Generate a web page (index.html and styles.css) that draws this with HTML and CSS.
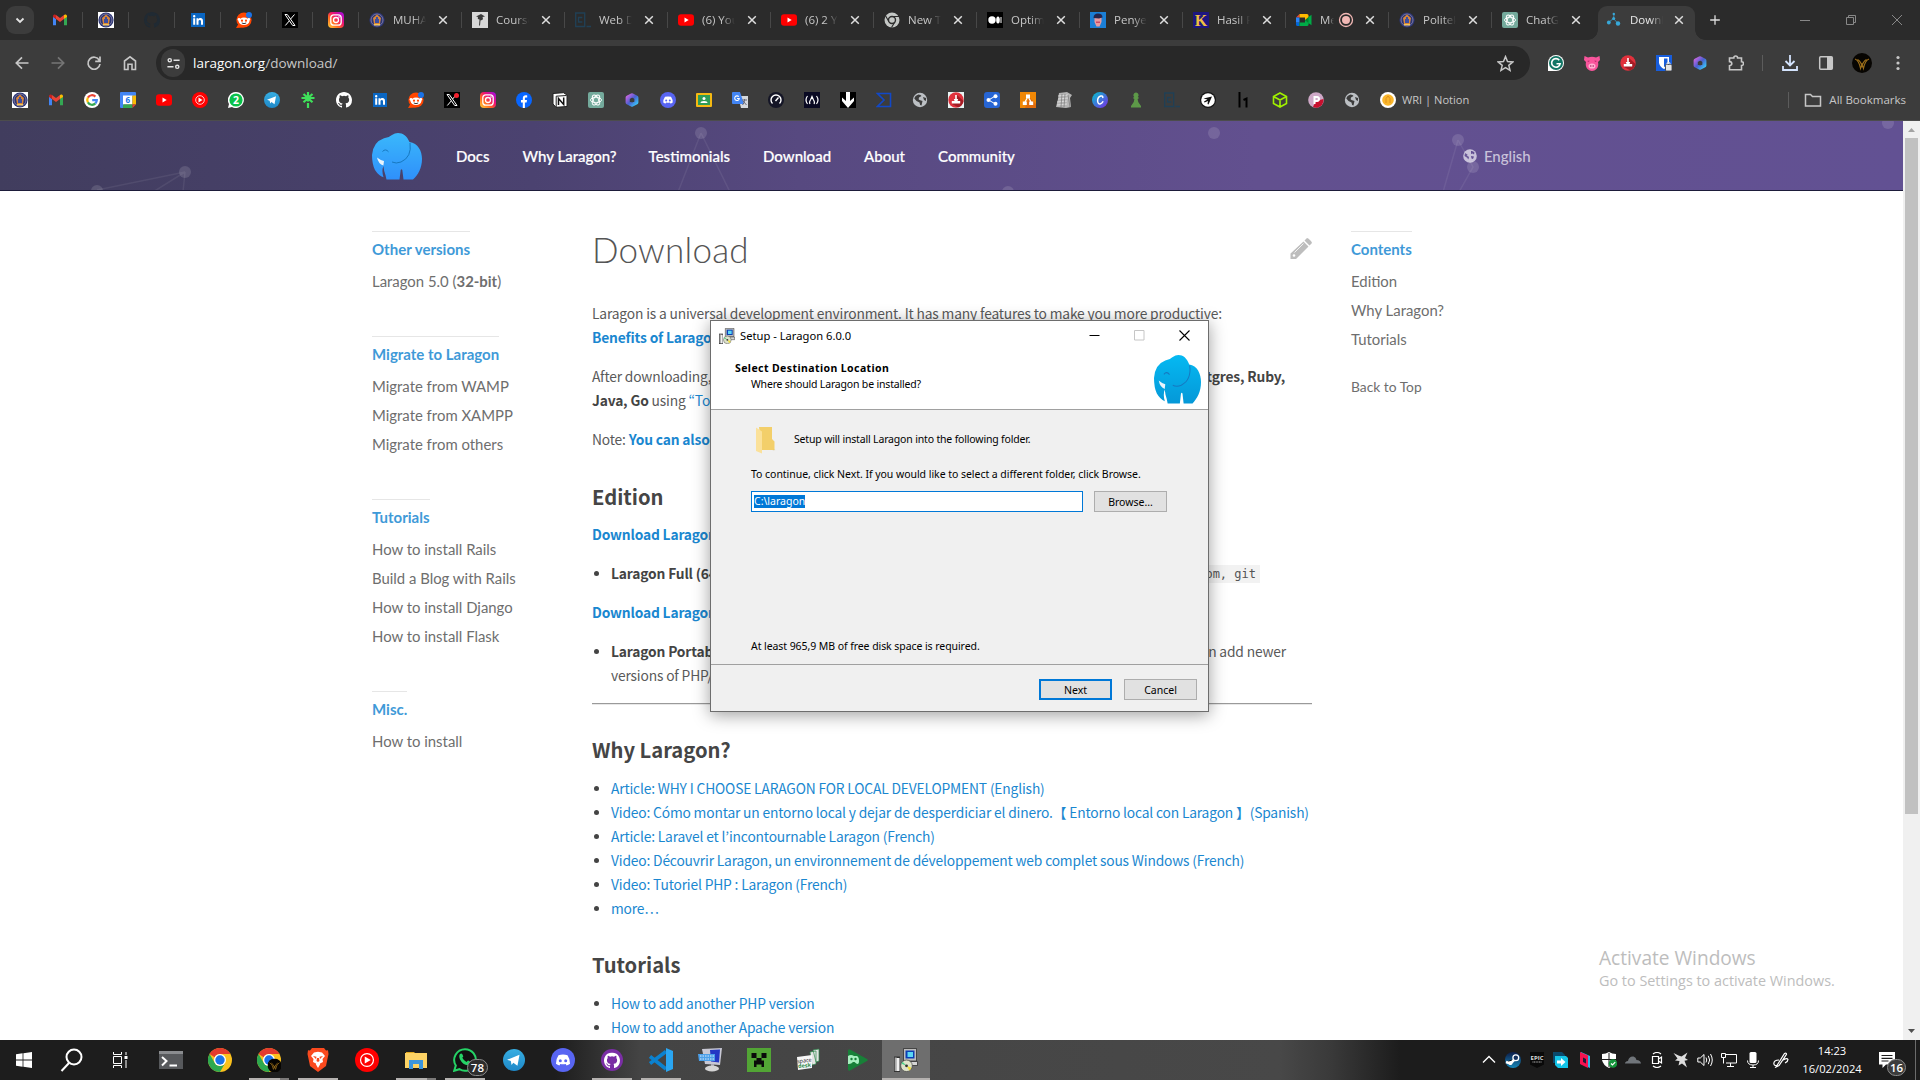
FILE: index.html
```html
<!DOCTYPE html>
<html lang="en">
<head>
<meta charset="utf-8">
<title>Download | Laragon</title>
<link rel="stylesheet" href="styles.css">
</head>
<body>
<svg class="defs" aria-hidden="true">
  <defs>
    <linearGradient id="g-insta" x1="0" y1="1" x2="1" y2="0"><stop offset="0" stop-color="#ffd23b"/><stop offset=".35" stop-color="#ff6a20"/><stop offset=".6" stop-color="#f0146e"/><stop offset="1" stop-color="#9a0af0"/></linearGradient>
    <linearGradient id="g-tele" x1="0" y1="0" x2="0" y2="1"><stop offset="0" stop-color="#37aee2"/><stop offset="1" stop-color="#1e88c8"/></linearGradient>
    <linearGradient id="g-m365" x1="0" y1="0" x2="1" y2="1"><stop offset="0" stop-color="#c065e0"/><stop offset=".5" stop-color="#4a5fd0"/><stop offset="1" stop-color="#3bc0f5"/></linearGradient>
    <linearGradient id="g-canva" x1="0" y1="0" x2="1" y2="1"><stop offset="0" stop-color="#00c4cc"/><stop offset="1" stop-color="#7d2ae8"/></linearGradient>
    <linearGradient id="g-eleph" x1="0" y1="0" x2="0" y2="1"><stop offset="0" stop-color="#3ab8fb"/><stop offset="1" stop-color="#2f90fb"/></linearGradient>
    <linearGradient id="g-eleph2" x1="0" y1="0" x2="0" y2="1"><stop offset="0" stop-color="#05b9f2"/><stop offset="1" stop-color="#0598d8"/></linearGradient>
    <linearGradient id="g-steam" x1="0" y1="0" x2="0" y2="1"><stop offset="0" stop-color="#0d1c48"/><stop offset="1" stop-color="#1787b8"/></linearGradient>
  </defs>
  <symbol id="crest" viewBox="0 0 16 16"><circle cx="8" cy="8" r="7.600" fill="#2b3574"/><circle cx="8" cy="8" r="6" fill="none" stroke="#8e86a8" stroke-width=".8"/><path d="M8 2.500 12 6l-1 6H5L4 6z" fill="#d8863a"/><path d="M7 5h2v2h1v4H6V7h1z" fill="#3d4ea0"/><path d="M5 12h6v1.400H5z" fill="#f3c65a"/></symbol>
  <symbol id="crest-sq" viewBox="0 0 16 16"><path fill="#fff" d="M0 0h16v16H0z"/><use href="#crest"/></symbol>
  <symbol id="gmail" viewBox="0 0 16 16"><path fill="#4285f4" d="M1 4.500v8.800h3V7z"/><path fill="#34a853" d="M12 7v6.300h3V4.500z"/><path fill="#c5221f" d="M1 4.300C1 2.500 3 2 4 3v4L1 5z"/><path fill="#fbbc04" d="M15 4.300C15 2.500 13 2 12 3v4l3-2z"/><path fill="#ea4335" d="M4 3l4 3 4-3v4l-4 3-4-3z"/></symbol>
  <symbol id="github" viewBox="0 0 16 16"><path d="M8 0C3.580 0 0 3.580 0 8c0 3.540 2.290 6.530 5.470 7.590.4.07.55-.17.55-.38v-1.490c-2.010.37-2.530-.49-2.690-.94-.09-.23-.48-.94-.82-1.130-.28-.15-.68-.52-.01-.53.63-.01 1.080.58 1.230.82.72 1.210 1.870.87 2.330.66.07-.52.28-.87.51-1.070-1.780-.2-3.640-.89-3.640-3.950 0-.87.31-1.590.82-2.150-.08-.2-.36-1.020.08-2.120 0 0 .67-.21 2.200.82a7.500 7.500 0 0 1 4 0c1.530-1.040 2.200-.82 2.200-.82.44 1.100.16 1.920.08 2.120.51.56.82 1.270.82 2.150 0 3.070-1.870 3.750-3.650 3.950.29.25.54.73.54 1.480v2.200c0 .21.15.46.55.38A8.010 8.010 0 0 0 16 8c0-4.420-3.580-8-8-8z"/></symbol>
  <symbol id="linkedin" viewBox="0 0 16 16"><path fill="#0a66c2" d="M1 1h14v14H1z"/><path fill="#fff" d="M3.200 6.300h2v6.500h-2zM4.200 3a1.200 1.200 0 1 1 0 2.400 1.200 1.200 0 0 1 0-2.400zM6.500 6.300h1.900v.9c.4-.6 1.100-1.100 2-1.100 2 0 2.600 1.300 2.600 3.100v3.600h-2V9.600c0-.8-.1-1.700-1.200-1.700s-1.300.8-1.300 1.600v3.300h-2z"/></symbol>
  <symbol id="reddit" viewBox="0 0 16 16"><circle cx="8" cy="8" r="7.600" fill="#ff4500"/><path d="M0 16 3 11l5 4.500z" fill="#ff4500"/><ellipse cx="8" cy="9.300" rx="5.300" ry="3.700" fill="#fff"/><circle cx="3" cy="7.500" r="1.400" fill="#fff"/><circle cx="12.800" cy="7.500" r="1.400" fill="#fff"/><circle cx="6" cy="8.700" r="1.100" fill="#ff4500"/><circle cx="10" cy="8.700" r="1.100" fill="#ff4500"/><path d="M5.800 11q2.200 1.300 4.400 0" stroke="#222" fill="none" stroke-width=".9"/><circle cx="13" cy="3" r="3" fill="#1a73e8"/></symbol>
  <symbol id="xcom" viewBox="0 0 16 16"><path d="M0 0h16v16H0z"/><path fill="none" stroke="#fff" d="M3 2.500h2.300l7.700 11h-2.300z"/><path stroke="#fff" d="m12.500 2.500-4 4.600M7.300 8.900l-4 4.600"/></symbol>
  <symbol id="insta" viewBox="0 0 16 16"><rect width="16" height="16" rx="4" fill="url(#g-insta)"/><rect x="2.800" y="2.800" width="10.400" height="10.400" rx="3" fill="none" stroke="#fff" stroke-width="1.300"/><circle cx="8" cy="8" r="2.500" fill="none" stroke="#fff" stroke-width="1.300"/><circle cx="11" cy="5" r=".8" fill="#fff"/></symbol>
  <symbol id="google" viewBox="0 0 16 16"><circle cx="8" cy="8" r="8" fill="#fff"/><g fill="none" stroke-width="2.200"><path stroke="#ea4335" d="M3.900 5.600A4.800 4.800 0 0 1 11.400 4.600"/><path stroke="#fbbc05" d="M3.900 10.400a4.800 4.800 0 0 1 0-4.800"/><path stroke="#34a853" d="M3.900 10.400a4.800 4.800 0 0 0 7.500 1"/><path stroke="#4285f4" d="M11.400 11.400A4.800 4.800 0 0 0 12.800 8.200H8.200"/></g></symbol>
  <symbol id="gcal" viewBox="0 0 16 16"><path fill="#4285f4" d="M1 0h14a1 1 0 0 1 1 1v3H4v12H1a1 1 0 0 1-1-1V1a1 1 0 0 1 1-1z"/><path fill="#fff" d="M3 3.500h9.500v9H3z"/><path fill="#fbbc04" d="M12.500 3.500H16v9h-3.500z"/><path fill="#34a853" d="M3 12.500h9.500V16H3z"/><path fill="#ea4335" d="M12.500 12.500H16L12.500 16z"/><text x="7.700" y="11" font-size="8" font-weight="700" text-anchor="middle" fill="#1a73e8">6</text></symbol>
  <symbol id="youtube" viewBox="0 0 16 16"><rect y="2.300" width="16" height="11.400" rx="3" fill="#f00"/><path fill="#fff" d="m6.500 5.500 4.200 2.500-4.200 2.500z"/></symbol>
  <symbol id="ytmusic" viewBox="0 0 16 16"><circle cx="8" cy="8" r="8" fill="#f00"/><circle cx="8" cy="8" r="4.300" fill="none" stroke="#fff" stroke-width=".8"/><path fill="#fff" d="m6.500 5.600 4 2.400-4 2.400z"/></symbol>
  <symbol id="wa2" viewBox="0 0 16 16"><path fill="#fff" d="M8 0a8 8 0 1 1-4 15L0 16l1-4A8 8 0 0 1 8 0z"/><circle cx="8" cy="8" r="6.600" fill="#0ac14a"/><text x="8" y="11.800" font-size="10.500" font-weight="700" text-anchor="middle" fill="#fff">2</text></symbol>
  <symbol id="telegram" viewBox="0 0 16 16"><circle cx="8" cy="8" r="8" fill="url(#g-tele)"/><path fill="#fff" d="M3 7.800 12 4.200l-1.500 8-3-2.200-1.300 1.600-.5-2.800z"/></symbol>
  <symbol id="linktree" viewBox="0 0 16 16"><path fill="none" stroke="#3fe05a" stroke-width="2.200" d="M8 0v9.500M8 11v5M1.500 6h13M3.500 2 8 6l4.500-4M3.500 10.300 8 6.200l4.500 4.100"/></symbol>
  <symbol id="facebook" viewBox="0 0 16 16"><circle cx="8" cy="8" r="8" fill="#0866ff"/><path fill="#fff" d="M6.800 16v-5.500H5V8h1.800V6.500c0-2.300 1.200-3.200 3-3.200.7 0 1.200.1 1.400.1v2.100H10c-.9 0-1.100.5-1.100 1.200V8H11l-.4 2.500H8.900V16z"/></symbol>
  <symbol id="notion" viewBox="0 0 16 16"><path fill="#fff" stroke="#222" d="M1 1.500 11.500.700 15 3v11.500L4 15.300 1 12z"/><path fill="none" stroke="#222" d="M4.200 4.200 14.500 3.500M4.200 4.200v11"/><path fill="none" stroke="#111" stroke-width="1.500" d="M6.500 13V6.500l5.200 6V5.500"/></symbol>
  <symbol id="chatgpt" viewBox="0 0 16 16"><rect width="16" height="16" rx="2" fill="#74aa9c"/><g fill="none" stroke="#fff" stroke-width=".9"><ellipse cx="8" cy="8" rx="5.500" ry="2.700"/><ellipse cx="8" cy="8" rx="5.500" ry="2.700" transform="rotate(60 8 8)"/><ellipse cx="8" cy="8" rx="5.500" ry="2.700" transform="rotate(120 8 8)"/></g></symbol>
  <symbol id="m365" viewBox="0 0 16 16"><path fill="none" stroke="url(#g-m365)" stroke-width="4.200" stroke-linejoin="round" d="m8 3.300 4.300 2.300v4.800L8 12.700l-4.300-2.300V5.600z"/><path d="M8 5.500 10.200 7v2.500L8 10.500 6 9.500z" fill="#3c3c3c"/></symbol>
  <symbol id="discord" viewBox="0 0 16 16"><circle cx="8" cy="8" r="8" fill="#5865f2"/><path fill="#fff" d="M5 4.800Q8 4 11 4.800q1.900 2.800 1.700 5.700-1.100.9-2.300 1.100l-.6-1q-1.800.5-3.600 0l-.6 1q-1.200-.2-2.300-1.100Q3.100 7.600 5 4.800z"/><circle cx="6.200" cy="8.500" r="1" fill="#5865f2"/><circle cx="9.800" cy="8.500" r="1" fill="#5865f2"/></symbol>
  <symbol id="classroom" viewBox="0 0 16 16"><rect y="1" width="16" height="14" rx="1" fill="#f5b912"/><path fill="#2e9c57" d="M2 3h12v10H2z"/><circle cx="8" cy="6.500" r="1.500" fill="#fff"/><path fill="#fff" d="M4.500 11q0-2 3.500-2t3.500 2z"/></symbol>
  <symbol id="translate" viewBox="0 0 16 16"><path fill="#d5d8dc" d="M6 4h10v12H9z"/><path fill="#4285f4" d="M1 0h7l4 12H1a1 1 0 0 1-1-1V1a1 1 0 0 1 1-1z"/><path fill="none" stroke="#fff" stroke-width="1.100" d="M6.800 4.700A2.300 2.300 0 1 0 7.300 6.500H5"/><path stroke="#667" fill="none" d="M10 8h5M12.500 7v1q0 3-2 5M11 9l3.500 4"/></symbol>
  <symbol id="speed" viewBox="0 0 16 16"><circle cx="8" cy="8" r="8" fill="#141526"/><path fill="none" stroke="#fff" stroke-width="1.400" d="M4.500 11.500a5 5 0 1 1 7 0M7.500 9l3-3.500"/></symbol>
  <symbol id="fcc" viewBox="0 0 16 16"><path fill="#0a0a23" d="M0 0h16v16H0z"/><path fill="none" stroke="#fff" stroke-width="1.200" d="M3.500 4q-3 4 0 8M12.500 4q3 4 0 8M6 12q-1-2 .5-4L8 4.500 9.500 8q1.500 2 .5 4"/></symbol>
  <symbol id="downarrow" viewBox="0 0 16 16"><path d="M0 0h16v16H0z"/><path fill="#fff" d="M6 0h4v9l4-3.500V9l-6 7-6-7V5.500L6 9z"/></symbol>
  <symbol id="sigma" viewBox="0 0 16 16"><path fill="none" stroke="#1148c8" stroke-width="1.600" d="M1.500 1.500h13v13h-13L8 8z"/></symbol>
  <symbol id="globe" viewBox="0 0 16 16"><circle cx="8" cy="8" r="7.200" fill="#bcc0c4"/><path fill="#3c3c3c" d="M6.500 2.500Q9 2.500 9.500 4L7 5.500q-1 2 .5 2.500l3 1-1 4.500q-2-.5-2-3L4.500 9 2.300 6.500Q3 3.500 6.500 2.500zM11 5l3 1v3l-2-1z"/></symbol>
  <symbol id="reddl" viewBox="0 0 16 16"><circle cx="8" cy="8" r="7.700" fill="#e0313c"/><path d="m9 3 6.500 6q-1 5-5.500 6.300L4 12z" fill="#a51c25"/><path fill="#fff" d="M7.200 3h1.600v4h1.400L9.500 9h2.700v2.500H3.800V9h2.700l-.7-2h1.400z"/></symbol>
  <symbol id="reddl-sq" viewBox="0 0 16 16"><path fill="#e8f4f4" d="M0 0h16v16H0z"/><use href="#reddl"/></symbol>
  <symbol id="share" viewBox="0 0 16 16"><rect width="16" height="16" rx="3" fill="#2765d4"/><path stroke="#fff" fill="none" d="M11.500 4 4.500 8l7 4"/><circle cx="4.500" cy="8" r="2" fill="#fff"/><circle cx="11.500" cy="4.200" r="2" fill="#fff"/><circle cx="11.500" cy="11.800" r="2" fill="#fff"/></symbol>
  <symbol id="drawio" viewBox="0 0 16 16"><path fill="#f08705" d="M0 0h16v16H0z"/><path fill="#df6c0c" d="m9 5 7 7v4H5z"/><path stroke="#fff" fill="none" stroke-width="1.300" d="m5 10 3-5.500 3 5.500"/><path fill="#fff" d="M6 2.500h4v3.500H6zM2.800 9.500h4V13h-4zM9.200 9.500h4V13h-4z"/></symbol>
  <symbol id="graypage" viewBox="0 0 16 16"><path fill="#b4b4b4" d="M3 1 11 0l5 3-2 3 1 9-5 1-10-1 2-8z"/><path stroke="#e4e4e4" stroke-width=".8" d="M2 4 12 3M2 7l10-1M1 10l10-1M1 13l10-1"/><path stroke="#777" stroke-width=".7" d="m6 2-1 13M9 2l-1 13M12 3l2 12"/></symbol>
  <symbol id="canva" viewBox="0 0 16 16"><circle cx="8" cy="8" r="8" fill="url(#g-canva)"/><path fill="none" stroke="#fff" stroke-width="1.500" stroke-linecap="round" d="M10.800 5.500q0-2-2-1.500Q5.500 5 5.600 9q.4 3.500 3 2.800 1.500-.4 2.200-2"/></symbol>
  <symbol id="pawn" viewBox="0 0 16 16"><path fill="#5d9948" d="M8 .500a2.600 2.600 0 0 1 1.800 4.500l1.400 1-1.600.9q.2 3 2 5.100l1.400 2v1.500H3V14l1.400-2q1.800-2.100 2-5.100L4.800 6l1.400-1A2.600 2.600 0 0 1 8 .500z"/></symbol>
  <symbol id="codec" viewBox="0 0 16 16"><path fill="none" stroke="#204056" stroke-width="1.300" d="M.7 1h9v13.500h-9zM7.300 5.500H3.500v4.500h3.800M11.500 14.500H16"/></symbol>
  <symbol id="send" viewBox="0 0 16 16"><circle cx="8" cy="8" r="8" fill="#151515"/><circle cx="8" cy="8" r="6.800" fill="#fff"/><path fill="#111" d="M3.500 6.500 12 4.500 8.500 12.500 7.500 12l.5-3-3.500 1.500-.5-1 3.500-2z"/></symbol>
  <symbol id="h1" viewBox="0 0 16 16"><path fill="none" stroke="#000" stroke-width="2" d="M3.500 0v15.500M7.500 8l3-1.500v9"/></symbol>
  <symbol id="cube" viewBox="0 0 16 16"><path fill="none" stroke="#9fef00" stroke-width="1.600" d="m8 1 6.500 3.500v7L8 15l-6.500-3.500v-7zM1.500 4.500 8 8l6.500-3.500M8 8v7"/></symbol>
  <symbol id="pp" viewBox="0 0 16 16"><circle cx="8" cy="8" r="7.800" fill="#cfa9c8"/><path fill="#c8102e" d="m8 9 7.500-2Q16 13 10 15.600q-3 .6-5-.8z"/><path fill="none" stroke="#fff" stroke-width="2" d="M6.500 12V5H9q2 .3 2 2t-2 2H6.500"/></symbol>
  <symbol id="wri" viewBox="0 0 16 16"><circle cx="8" cy="8" r="8" fill="#fff"/><circle cx="8" cy="8" r="5.800" fill="#f9b62c"/><path fill="none" stroke="#e0901c" d="M6 11V6.500L8 4l2 2.500V11"/></symbol>
  <symbol id="chromegray" viewBox="0 0 16 16"><circle cx="8" cy="8" r="7.500" fill="#c4c7c5"/><path stroke="#2b2b2b" fill="none" stroke-width="1.100" d="M8 4.500h7M5 9.800 1.500 3.700M11 9.800 7.500 15.500"/><circle cx="8" cy="8" r="3.500" fill="#c4c7c5" stroke="#2b2b2b" stroke-width="1.400"/></symbol>
  <symbol id="medium" viewBox="0 0 16 16"><path d="M0 0h16v16H0z"/><circle cx="5" cy="8" r="3.700" fill="#fff"/><ellipse cx="11" cy="8" rx="1.800" ry="3.500" fill="#fff"/><path fill="#fff" d="M13.500 5h1v6h-1z"/></symbol>
  <symbol id="penye" viewBox="0 0 16 16"><path fill="#1b7fd6" d="M0 0h16v16H0z"/><path fill="#e89ba0" d="M4.500 5h7v5l-2 4.500h-3l-2-4.500z"/><path fill="#26264d" d="M3.500 6q0-4.500 4.500-4.500t4.500 4L9 6.500z"/><path fill="#c94a66" d="M6 9.500h4v1.500H6z"/></symbol>
  <symbol id="kk" viewBox="0 0 16 16"><path fill="#1d1680" d="M0 0h16v16H0z"/><text x="8" y="13.500" font-family="Liberation Serif, serif" font-size="16" font-weight="700" text-anchor="middle" fill="#f0c040">K</text></symbol>
  <symbol id="meet" viewBox="0 0 16 16"><path fill="#00832d" d="M9 8l4-4v8z"/><path fill="#0066da" d="M0 10.500h3.500V14H1.500A1.500 1.500 0 0 1 0 12.500z"/><path fill="#e94235" d="M3.500 2v3.500H0z"/><path fill="#2684fc" d="M0 5.500h3.500v5H0z"/><path fill="#ffba00" d="M3.500 2H11a1.500 1.500 0 0 1 1.500 1.500V5L9 8V5.500H3.500z"/><path fill="#00ac47" d="M3.500 14H11a1.500 1.500 0 0 0 1.500-1.500V11L9 8v2.500H3.500zM12.500 5 15.500 2.800v10.400L12.500 11z"/></symbol>
  <symbol id="molecule" viewBox="0 0 16 16"><path stroke="#37a8d8" stroke-width=".7" fill="none" d="M3 10 7.500 6.500 8 3M7.500 6.500 11.500 11"/><circle cx="2.800" cy="10.500" r="1.900" fill="#37a8d8"/><circle cx="7.700" cy="6.500" r="1.500" fill="#37a8d8"/><circle cx="7.800" cy="2" r="1.200" fill="#37a8d8"/><circle cx="12" cy="11.500" r="2.200" fill="#37a8d8"/></symbol>
  <symbol id="course" viewBox="0 0 16 16"><path fill="#d8d8d8" d="M0 0h16v16H0z"/><path fill="#3a3a3a" d="M4 4.500 9 2l4 2.500-2.500.5q1.500 3-2 3.500l-.5 5H7l.5-6Q5 7 6 5z"/></symbol>
  <symbol id="cross" viewBox="0 0 16 16"><path stroke="#dedede" stroke-width="1.500" d="m4.200 4.200 7.600 7.600M11.800 4.200l-7.600 7.600"/></symbol>
  <symbol id="grammarly" viewBox="0 0 16 16"><path fill="#fff" d="M8 0a8 8 0 1 1 0 16H0V8a8 8 0 0 1 8-8z"/><circle cx="8" cy="8" r="7" fill="#127565"/><path fill="none" stroke="#fff" stroke-width="1.600" d="M11.300 5.200A4.300 4.300 0 1 0 12.200 8.700H8.500"/></symbol>
  <symbol id="pig" viewBox="0 0 16 16"><path fill="#f9559c" d="M.5 1 4 2.500Q8 1 12 2.500L15.500 1l.5 4-2 2q1 4-1.500 7-2 2-4.500 2t-4.500-2Q1 11 2 7L0 5z"/><path fill="#b32766" d="M3 6 5.500 5.500 5 7zM13 6l-2.500-.5L11 7z"/><ellipse cx="8" cy="11" rx="3.500" ry="2.600" fill="#ffb1d2"/><circle cx="6.800" cy="11" r=".8" fill="#a82060"/><circle cx="9.200" cy="11" r=".8" fill="#a82060"/></symbol>
  <symbol id="bitwarden" viewBox="0 0 16 16"><path fill="#175ddc" d="M0 0h16v16H0z"/><path fill="#fff" d="M3 2h10v6q-1 4-5 6-4-2-5-6z"/><path fill="#175ddc" d="M8 3.500h3.500V8Q11 10.500 8 12.200z"/><rect x="9.500" y="9.500" width="6.500" height="6.500" rx="1" fill="#e4e4e4" stroke="#333" stroke-width=".8"/><path fill="none" stroke="#ddd" d="M11 9.500V7.800h3v1.700"/></symbol>
  <symbol id="elephant" viewBox="0 0 50 47" preserveAspectRatio="none"><path d="M26 0c5 0 9 3 11.500 9C46 10 50 18 50 26c0 9-4 16-9 20.500H31.500L30.300 37q-.8-1.500-1.600 0L27.500 46.500H14.500q-1-5-2.300-8.500l-.8-5q-2 5 .100 11.300-5-1.800-8.500-7.300Q0 31 0 22 1 9 12 5.200q5-.5 7.500-3Q23 0 26 0z"/><path d="M5 24.500q3 2.500 7 3.500l-.6 4.500q-5-1.500-6.400-8z" fill="#eaf4fc"/><path d="M10.500 18.500q3-3.300 6 .300M38 10q2 14-9 19-5 2-9 0" fill="none" stroke="#1778c0" stroke-width="1"/></symbol>
  <symbol id="chrome" viewBox="0 0 24 24"><circle cx="12" cy="12" r="12" fill="#fbc11d"/><path fill="#e33b2e" d="M1.600 6A12 12 0 0 1 22.400 6H12a6 6 0 0 0-5.300 3.200z"/><path fill="#2da94f" d="M1.600 6A12 12 0 0 0 12 24l5.200-9a6 6 0 0 1-10.400 0z"/><circle cx="12" cy="12" r="6" fill="#fff"/><circle cx="12" cy="12" r="4.700" fill="#1a73e8"/></symbol>
  <symbol id="avatar" viewBox="0 0 20 20"><circle cx="10" cy="10" r="10" fill="#070502"/><path fill="none" stroke="#9a6d1a" stroke-width="1.100" d="M3 6q4 1.500 5.500 9.500L10 11l1.500 4.500Q13 7.500 17 6M5.500 6.500Q8.500 8 10 13q1.500-5 4.500-6.500"/></symbol>
  <symbol id="setup" viewBox="0 0 24 24"><path fill="#333" d="M0 8.500h6V24H0z"/><path fill="#a9a9a9" d="M.7 9.500h2V23h-2z"/><path fill="#f0f0f0" d="M2.500 10h3v13h-3z"/><path fill="#bdbdbd" stroke="#222" stroke-width=".7" d="M9.500.500h13V13h-13z"/><path fill="#0b3fb5" d="M11.500 2.500h9v8h-9z"/><path fill="#5ad7f5" d="M13.500 4H19v5h-5.500z"/><path fill="#d5d5d5" stroke="#222" stroke-width=".7" d="M10 13.500h13.500v4H10z"/><circle cx="12.500" cy="17.800" r="5.800" fill="#dfe3c9" stroke="#444" stroke-width=".7"/><path fill="#4ad08a" d="m12.500 17.800-5-2 1-2z"/><path fill="#f2dd3a" d="m12.500 17.800 5 2-2 3z"/><circle cx="12.500" cy="17.800" r="1.400" fill="#333"/></symbol>
</svg>

<div class="screen">
  <div class="tabstrip">
    <div class="tabsearch"><svg viewBox="0 0 28 28"><path d="m10.500 12.500 3.500 3.500 3.500-3.500" fill="none" stroke="#e3e3e3" stroke-width="1.800"/></svg></div>
    <div class="pin"><svg><use href="#gmail"/></svg></div>
    <div class="pin"><svg><use href="#crest-sq"/></svg></div>
    <div class="pin dark"><svg><use href="#github"/></svg></div>
    <div class="pin"><svg><use href="#linkedin"/></svg></div>
    <div class="pin"><svg><use href="#reddit"/></svg></div>
    <div class="pin"><svg><use href="#xcom"/></svg></div>
    <div class="pin"><svg><use href="#insta"/></svg></div>
    <div class="tab"><svg><use href="#crest"/></svg><span>MUHAMMAD</span><svg><use href="#cross"/></svg></div>
    <div class="tab"><svg><use href="#course"/></svg><span>Course</span><svg><use href="#cross"/></svg></div>
    <div class="tab"><svg><use href="#codec"/></svg><span>Web Dev</span><svg><use href="#cross"/></svg></div>
    <div class="tab"><svg><use href="#youtube"/></svg><span>(6) YouT</span><svg><use href="#cross"/></svg></div>
    <div class="tab"><svg><use href="#youtube"/></svg><span>(6) 2 You</span><svg><use href="#cross"/></svg></div>
    <div class="tab"><svg><use href="#chromegray"/></svg><span>New Tab</span><svg><use href="#cross"/></svg></div>
    <div class="tab"><svg><use href="#medium"/></svg><span>Optimi</span><svg><use href="#cross"/></svg></div>
    <div class="tab"><svg><use href="#penye"/></svg><span>Penyeb</span><svg><use href="#cross"/></svg></div>
    <div class="tab"><svg><use href="#kk"/></svg><span>Hasil Pe</span><svg><use href="#cross"/></svg></div>
    <div class="tab rec"><svg><use href="#meet"/></svg><span>Meet</span><svg viewBox="0 0 16 16"><circle cx="8" cy="8" r="6.500" fill="none" stroke="#f2b8b5" stroke-width="1.300"/><circle cx="8" cy="8" r="4" fill="#f2b8b5"/></svg><svg><use href="#cross"/></svg></div>
    <div class="tab"><svg><use href="#crest"/></svg><span>Politekn</span><svg><use href="#cross"/></svg></div>
    <div class="tab last"><svg><use href="#chatgpt"/></svg><span>ChatGP</span><svg><use href="#cross"/></svg></div>
    <div class="tab active"><svg><use href="#molecule"/></svg><span>Downlo</span><svg><use href="#cross"/></svg></div>
    <svg class="newtab" viewBox="0 0 16 16"><path d="M8 2.500v11M2.500 8h11" stroke="#dedede" stroke-width="1.500"/></svg>
    <div class="winbtns">
      <svg viewBox="0 0 12 12"><path d="M1 6.500h10" stroke="#888"/></svg>
      <svg viewBox="0 0 12 12"><path d="M1.500 3.500h7v7h-7zM3.500 3.500v-2h7v7h-2" fill="none" stroke="#888"/></svg>
      <svg viewBox="0 0 12 12"><path d="m1 1 10 10M11 1 1 11" stroke="#888"/></svg>
    </div>
  </div>

  <div class="toolbar">
    <svg class="nav" viewBox="0 0 16 16"><path d="M14.500 8H2.500M8 2.300 2.300 8 8 13.700" fill="none" stroke="#c7c7c7" stroke-width="1.700"/></svg>
    <svg class="nav" viewBox="0 0 16 16"><path d="M1.500 8h12M8 2.300 13.700 8 8 13.700" fill="none" stroke="#757575" stroke-width="1.700"/></svg>
    <svg class="nav" viewBox="0 0 16 16"><path d="M13.300 5.300A6 6 0 1 0 14 9M14 1.500v4.800H9.200" fill="none" stroke="#c7c7c7" stroke-width="1.700"/></svg>
    <svg class="nav" viewBox="0 0 16 16"><path d="M2.500 14.500V6L8 1.800 13.500 6v8.500H10V9.300H6v5.200z" fill="none" stroke="#c7c7c7" stroke-width="1.600"/></svg>
    <div class="omnibox">
      <span class="siteinfo"><svg viewBox="0 0 16 16"><g fill="none" stroke="#e3e3e3" stroke-width="1.500"><circle cx="4" cy="4.500" r="1.700"/><path d="M8 4.500h6.500M1.500 11.500H8"/><circle cx="12" cy="11.500" r="1.700"/></g></svg></span>
      <span class="url"><b>laragon.org</b>/download/</span>
      <svg class="star" viewBox="0 0 16 16"><path d="m8 1.500 1.900 4.600 5 .4-3.800 3.200 1.200 4.800L8 11.900l-4.300 2.600 1.200-4.800L1.100 6.500l5-.4z" fill="none" stroke="#c7c7c7" stroke-width="1.400"/></svg>
    </div>
    <div class="ext">
      <svg><use href="#grammarly"/></svg><svg><use href="#pig"/></svg><svg><use href="#reddl"/></svg><svg><use href="#bitwarden"/></svg><svg><use href="#m365"/></svg>
      <svg viewBox="0 0 16 16"><path d="M1.500 3h4.300q0-2 1.900-2t1.900 2h3.900v3.700q2 0 2 1.900t-2 1.900v4.200h-12v-4q2.300-.2 2.300-2.100t-2.300-2z" fill="none" stroke="#c7c7c7" stroke-width="1.600"/></svg>
    </div>
    <i class="vsep"></i>
    <div class="ext right">
      <svg viewBox="0 0 16 16"><path d="M8 0v10M3.500 6 8 10.500 12.500 6M1 11v4h14v-4" fill="none" stroke="#d3e3fd" stroke-width="1.800"/></svg>
      <svg viewBox="0 0 16 16"><rect x="1.700" y="1.800" width="12.600" height="12.400" rx="1" fill="none" stroke="#c7c7c7" stroke-width="1.500"/><path fill="#c7c7c7" d="M9 2h5v12H9z"/></svg>
      <svg class="big"><use href="#avatar"/></svg>
      <svg viewBox="0 0 16 16"><g fill="#c7c7c7"><circle cx="8" cy="2.500" r="1.600"/><circle cx="8" cy="8" r="1.600"/><circle cx="8" cy="13.500" r="1.600"/></g></svg>
    </div>
  </div>

  <div class="bookmarks">
    <svg><use href="#crest-sq"/></svg><svg><use href="#gmail"/></svg><svg><use href="#google"/></svg><svg><use href="#gcal"/></svg><svg><use href="#youtube"/></svg><svg><use href="#ytmusic"/></svg><svg><use href="#wa2"/></svg><svg><use href="#telegram"/></svg><svg><use href="#linktree"/></svg><svg class="white"><use href="#github"/></svg><svg><use href="#linkedin"/></svg><svg><use href="#reddit"/></svg><svg viewBox="0 0 16 16"><use href="#xcom"/><circle cx="12.500" cy="3.500" r="2.500" fill="#f4212e"/></svg><svg><use href="#insta"/></svg><svg><use href="#facebook"/></svg><svg><use href="#notion"/></svg><svg><use href="#chatgpt"/></svg><svg><use href="#m365"/></svg><svg><use href="#discord"/></svg><svg><use href="#classroom"/></svg><svg><use href="#translate"/></svg><svg><use href="#speed"/></svg><svg><use href="#fcc"/></svg><svg><use href="#downarrow"/></svg><svg><use href="#sigma"/></svg><svg><use href="#globe"/></svg><svg><use href="#reddl-sq"/></svg><svg><use href="#share"/></svg><svg><use href="#drawio"/></svg><svg><use href="#graypage"/></svg><svg><use href="#canva"/></svg><svg><use href="#pawn"/></svg><svg><use href="#codec"/></svg><svg><use href="#send"/></svg><svg><use href="#h1"/></svg><svg><use href="#cube"/></svg><svg><use href="#pp"/></svg><svg><use href="#globe"/></svg><svg><use href="#wri"/></svg>
    <span class="bm-label">WRI | Notion</span>
    <div class="allbm"><i class="vsep"></i><svg viewBox="0 0 18 16"><path d="M1.500 2.500h5l2 2h8v9.500h-15z" fill="none" stroke="#c7c7c7" stroke-width="1.500"/></svg><span>All Bookmarks</span></div>
  </div>

  <div class="viewport">
    <div class="page">
      <header class="site-header">
        <svg class="net" viewBox="0 0 1903 69"><g fill="#fff" fill-opacity=".13"><circle cx="185" cy="51" r="6"/><circle cx="97" cy="70" r="6"/><circle cx="701" cy="12" r="6"/><circle cx="1008" cy="71" r="6"/><circle cx="1214" cy="12" r="6"/><circle cx="1458" cy="19" r="6"/><circle cx="1473" cy="46" r="6"/><circle cx="1888" cy="2" r="6"/></g><path fill="none" stroke="#fff" stroke-opacity=".07" stroke-width="1.500" d="M97 69l88-18-32 20M185 51l-2 20M701 12l-23 59M701 12l29 59M1458 19l15 27-14 25M1458 19l-15 52"/></svg>
        <svg class="logo" fill="url(#g-eleph)"><use href="#elephant"/></svg>
        <nav><a>Docs</a><a>Why Laragon?</a><a class="tight">Testimonials</a><a>Download</a><a>About</a><a>Community</a></nav>
        <div class="lang"><svg viewBox="0 0 14 14"><circle cx="7" cy="7" r="6.800" fill="#c9c2da"/><path fill="#625092" d="M8 2q2-.5 3.500 1.500L11 5.500l-1.500-1L8 5zM2 4l2.500 1.500-.5 1L6 8l-.5 2.500L3.800 8.500 1.500 7zM8 7l3 .5L10 10 8.500 9.500z"/></svg><span>English</span></div>
      </header>
      <div class="content">
        <aside class="side">
          <section><h4>Other versions</h4><a>Laragon 5.0 (<b>32-bit</b>)</a></section>
          <section><h4>Migrate to Laragon</h4><a>Migrate from WAMP</a><a>Migrate from XAMPP</a><a>Migrate from others</a></section>
          <section><h4>Tutorials</h4><a>How to install Rails</a><a>Build a Blog with Rails</a><a>How to install Django</a><a>How to install Flask</a></section>
          <section><h4>Misc.</h4><a>How to install</a></section>
        </aside>
        <main>
          <div class="title"><h1>Download</h1><svg viewBox="0 0 22 22"><path fill="#bdbdbd" d="M14.500 2.500 17 0q1 0 3 2t2 3l-2.500 2.500zM13.500 3.500l5 5L6 21H.5v-5.500z"/><path stroke="#fff" stroke-width=".8" d="m4.500 14.500 9-9"/><circle cx="4" cy="17.500" r="1.300" fill="#fff"/></svg></div>
          <p>Laragon is a universal development environment. It has many features to make you more productive:<br><a><b>Benefits of Laragon</b></a></p>
          <p class="pair"><span>After downloading,</span><b>Postgres, Ruby,</b></p>
          <p class="cont"><b>Java, Go</b> using <a>“Tools”</a></p>
          <p>Note: <a><b>You can also</b></a></p>
          <h2>Edition</h2>
          <p><a><b>Download Laragon</b></a></p>
          <ul><li class="pair"><b>Laragon Full (64-bit)</b><code>om, git</code></li></ul>
          <p><a><b>Download Laragon</b></a></p>
          <ul><li><div class="pair short"><b>Laragon Portable</b><span>can add newer</span></div>versions of PHP/</li></ul>
          <hr>
          <h2>Why Laragon?</h2>
          <ul class="links">
            <li><a>Article: WHY I CHOOSE LARAGON FOR LOCAL DEVELOPMENT (English)</a></li>
            <li><a>Video: Cómo montar un entorno local y dejar de desperdiciar el dinero.【 Entorno local con Laragon 】(Spanish)</a></li>
            <li><a>Article: Laravel et l’incontournable Laragon (French)</a></li>
            <li><a>Video: Découvrir Laragon, un environnement de développement web complet sous Windows (French)</a></li>
            <li><a>Video: Tutoriel PHP : Laragon (French)</a></li>
            <li><a>more…</a></li>
          </ul>
          <h2>Tutorials</h2>
          <ul class="links">
            <li><a>How to add another PHP version</a></li>
            <li><a>How to add another Apache version</a></li>
          </ul>
        </main>
        <aside class="side toc">
          <section><h4>Contents</h4><a>Edition</a><a>Why Laragon?</a><a>Tutorials</a></section>
          <a class="top">Back to Top</a>
        </aside>
      </div>
    </div>
    <div class="scrollbar"><svg viewBox="0 0 17 17"><path d="M5 11h7L8.500 7z" fill="#a3a3a3"/></svg><i></i><svg viewBox="0 0 17 17"><path d="M5 6h7l-3.500 4z" fill="#505050"/></svg></div>
  </div>

  <div class="taskbar">
    <div class="apps">
      <div class="tb"><svg viewBox="0 0 16 16"><path fill="#fff" d="M0 2.300 6.600 1.300v6.300H0zM7.400 1.200 16 0v7.600H7.400zM0 8.400h6.600v6.300L0 13.700zM7.400 8.400H16V16l-8.600-1.200z"/></svg></div>
      <div class="tb s24"><svg viewBox="0 0 24 24"><g fill="none" stroke="#fff" stroke-width="2"><circle cx="14" cy="9" r="7.500"/><path d="m9 15-7.500 8"/></g></svg></div>
      <div class="tb"><svg viewBox="0 0 16 16"><g fill="none" stroke="#fff"><path d="M1.500 4.500h8v7h-8zM1.500 0v2.500h8V0M1.500 16v-2.500h8V16M14 0v3M14 8v8"/></g><path fill="#fff" d="M12.500 4h3v3h-3z"/></svg></div>
      <div class="tb gap s24"><svg viewBox="0 0 24 24"><path fill="#57595c" d="M0 3h24v18H0z"/><path fill="#8a8c8f" d="M0 3h24v3H0z"/><path fill="none" stroke="#fff" stroke-width="2" d="m3 9 4.500 4L3 17.500M10.500 17.500h7.500"/></svg></div>
      <div class="tb s24"><svg><use href="#chrome"/></svg></div>
      <div class="tb s24 run multi"><svg viewBox="0 0 24 24"><use href="#chrome" width="24" height="24"/><use href="#avatar" x="10.500" y="10.500" width="14" height="14"/></svg></div>
      <div class="tb s24 run"><svg viewBox="0 0 24 24"><path fill="#fb4a1e" d="m6 0h12l2 2.500 2-.2.500 3.700L20 18l-8 6-8-6L1.500 6 2 2.300l2 .2z"/><path fill="#fff" d="m8 4.500 4-.8 4 .8L19 8l-2.500 3 .5 3-3 1.500v1l-2 3.500-2-3.500v-1L7 14l.5-3L5 8z"/><path fill="#fb4a1e" d="m7 8 3.500.8L10 11zM17 8l-3.500.8L14 11zM11 10h2l.5 3-1.500 1-1.500-1z"/></svg></div>
      <div class="tb s24"><svg><use href="#ytmusic"/></svg></div>
      <div class="tb s22 run multi"><svg viewBox="0 0 22 22"><path fill="#e0a820" d="M1 3h8l2 2H1z"/><path fill="#fdd365" d="M0 4h22v15H0z"/><path fill="#3b95dd" d="M4 11h14v9h-4v-5H8v5H4z"/></svg></div>
      <div class="tb s24 run"><svg viewBox="0 0 24 24"><path fill="#111" stroke="#25d366" stroke-width="2" d="M12 1.200a10.800 10.800 0 1 1-5.600 20L1.200 22.800l1.600-5.200A10.800 10.800 0 0 1 12 1.200z"/><path fill="#25d366" d="M7 6q1.500-1.300 2.500.5l.8 2-1 1.300q1.500 3 4.200 4.200l1.500-1.500 2.700 1.300q.3 3-3 3.500Q10 17 7 11.500 5.500 8 7 6z"/></svg><em class="badge">78</em></div>
      <div class="tb s22"><svg><use href="#telegram"/></svg></div>
      <div class="tb s24"><svg><use href="#discord"/></svg></div>
      <div class="tb s22 run"><svg viewBox="0 0 22 22"><circle cx="11" cy="11" r="11" fill="#7a2ea5"/><use href="#github" x="3" y="3.500" width="16" height="16" fill="#fff"/></svg></div>
      <div class="tb s24 run"><svg viewBox="0 0 24 24"><path fill="none" stroke="#0b82d0" stroke-width="3.600" d="M1 8.500 17 21M1 15.500 17 3.500"/><path fill="#2aa6f2" d="M17 0l7 3v18l-7 3z"/></svg></div>
      <div class="tb s24"><svg viewBox="0 0 24 24"><path fill="#c8c8d4" d="M4 1l20-1-2 17-15-1z"/><path fill="#2338c4" d="m12 2 10-.5-1 13-8-1z"/><path fill="#4ba0ea" d="M0 6h17v7H1z"/><path stroke="#fff" stroke-width=".8" stroke-dasharray="1.500 1" d="M2 8h14M2 11h14"/><path fill="#a9a9b2" d="M13 16h3v4h-3z"/><ellipse cx="14" cy="20.500" rx="7" ry="3" fill="#d5d5d5"/></svg></div>
      <div class="tb s24"><svg viewBox="0 0 24 24"><path fill="#52a535" d="M0 0h24v24H0z"/><path fill="#0a0a0a" d="M4.500 5h5v5h-5zM14.500 5h5v5h-5zM9.500 10h5v2.500H17V19h-2.500v-2.500h-5V19H7v-6.500h2.500z"/></svg></div>
      <div class="tb s24"><svg viewBox="0 0 24 24"><path fill="#e4e4e4" stroke="#2d8a4a" stroke-width=".7" d="M17 2l6-1v12l-3 1zM14 4l6-1v13l-4 1z"/><path fill="#f6f6f6" d="m1 9 15-2v13L2 22z"/><text x="8.500" y="14.500" font-size="5.500" text-anchor="middle" fill="#222" transform="rotate(-6 8 14)">space</text><text x="8.500" y="19.500" font-size="5.500" font-weight="700" text-anchor="middle" fill="#2d8a4a" transform="rotate(-6 8 18)">desk</text></svg></div>
      <div class="tb s22"><svg viewBox="0 0 22 22"><path fill="#188038" d="M2 1.500Q2 0 4 .600L21 10q1.500 1 0 2L4 21.500q-2 .5-2-1z"/><path fill="#a8f0c0" d="M2 7q3-2 6 0h3q2 1 2 5 0 3-1.500 3-1 0-3-2H7q-2 2.500-5 2z"/><circle cx="5.500" cy="10" r="1.200" fill="#188038"/><circle cx="9.500" cy="10" r="1.200" fill="#188038"/></svg></div>
      <div class="tb s24 run on"><svg><use href="#setup"/></svg></div>
    </div>
    <div class="tray">
      <svg viewBox="0 0 16 16"><path d="m2 10.500 6-6 6 6" fill="none" stroke="#fff" stroke-width="1.400"/></svg>
      <svg viewBox="0 0 16 16"><circle cx="8" cy="8" r="8" fill="url(#g-steam)"/><path stroke="#fff" stroke-width="2.500" d="m1 10 4.500 1.500L11 6"/><circle cx="10.800" cy="5.700" r="2.900" fill="#14315f" stroke="#fff" stroke-width="1.300"/><circle cx="5.500" cy="11" r="2" fill="#fff"/></svg>
      <svg viewBox="0 0 16 16"><path fill="#090909" d="M1 0h14v12.500L8 16l-7-3.500z"/><text x="8" y="7.500" font-size="6" font-weight="700" text-anchor="middle" fill="#ddd">EPIC</text><path stroke="#bbb" stroke-dasharray="1 .6" d="M3.500 10h9"/></svg>
      <svg viewBox="0 0 16 16"><path fill="#0a4a6d" d="M0 0h9l3 3v8H0z"/><path fill="#14c4e8" d="M2 4h11l2 2v10H5l-3-3z"/><path fill="#fff" d="M4 8.500h4V6l4.500 4L8 14v-2.500H4z"/></svg>
      <svg viewBox="0 0 16 16"><path fill="#29b6e8" d="m4 0 9 4v12L4 12z"/><path fill="#f5124f" d="m3 0 8 3.500V16L3 12z"/><path fill="#1b1b3a" d="m6 5.500 3 1.500v4.500L6 10z"/></svg>
      <svg viewBox="0 0 16 16"><path fill="#fff" d="M8 0q3 2 7 2v6q-1 5-7 8-6-3-7-8V2q4 0 7-2z"/><path stroke="#1c1c1c" d="M8 1v14M1 7.500h14"/><circle cx="12" cy="11.500" r="4.300" fill="#15963c"/><path d="m10 11.500 1.500 1.500 2.700-2.800" fill="none" stroke="#fff" stroke-width="1.200"/></svg>
      <svg viewBox="0 0 16 16"><path fill="#70757a" d="M0 11.500q0-2 3-2.500Q4 4 8.500 4.500 11 5 11.500 8q4 0 4.500 3.500z"/></svg>
      <svg viewBox="0 0 16 16"><path d="M4 2q4-3 8 0M4 14q4 3 8 0M3.500 4.500h6v7h-6zM9.500 7 12.500 5v6l-3-2" fill="none" stroke="#fff" stroke-width="1.200"/></svg>
      <svg viewBox="0 0 16 16"><path fill="#ddd" d="m.5 1 5 2.500 3 1L14.500.500 12 6l3 2-3.500.8 2.500 6.700L9 11.500l-3.500 2L6.500 9 2 8.500l2.500-2z"/></svg>
      <svg viewBox="0 0 16 16"><path d="M.8 6h2.500L7 2.500v11L3.300 10H.8zM9 5.500q1.500 2.500 0 5M11.300 3.800q2.700 4.200 0 8.400M13.500 2q3.500 6 0 12" fill="none" stroke="#fff"/></svg>
      <svg viewBox="0 0 16 16"><path d="M4.500 2.500h11v8.500H5M9.500 11v3.500M6 14.500h7M.5 1.500h4v4h-4zM2.500 5.500v6" fill="none" stroke="#fff"/></svg>
      <svg viewBox="0 0 16 16"><rect x="4.500" y="0" width="7" height="11" rx="1.500" fill="#fff"/><path d="M2.500 8.500q0 4.500 5.500 4.500t5.500-4.500M8 13v2.500M5 15.500h6" fill="none" stroke="#fff"/></svg>
      <svg class="pen" viewBox="0 0 16 16"><path d="M3 15 11.500 1.500q2-1 2 .8L6 13.500zM6 8q-5 0-5.200 3.500Q1 14 4 13.500M10 8q4-2.500 5-.5 0 2-3 3.500" fill="none" stroke="#fff" stroke-width="1.200"/></svg>
      <div class="clock"><span>14:23</span><span>16/02/2024</span></div>
      <div class="notif"><svg viewBox="0 0 16 16"><path fill="#fff" d="M0 0h16v12.500H7L3.500 16v-3.500H0z"/><path stroke="#1c1c1c" stroke-width="1.200" d="M2.500 3.500h11M2.500 6.300h11M2.500 9h7"/></svg><em class="badge">16</em></div>
      <i class="showdesk"></i>
    </div>
  </div>

  <div class="activate"><div>Activate Windows</div><span>Go to Settings to activate Windows.</span></div>

  <div class="dialog">
    <div class="dlg-title"><svg class="ic"><use href="#setup"/></svg><span>Setup - Laragon 6.0.0</span>
      <svg class="w1" viewBox="0 0 11 11"><path d="M.5 5.500h10" stroke="#000"/></svg><svg viewBox="0 0 11 11"><path d="M.5.500h9.500v9.500H.5z" fill="none" stroke="#c6c6c6"/></svg><svg viewBox="0 0 11 11"><path d="m.5.500 10 10M10.500.500l-10 10" stroke="#000" stroke-width="1.100"/></svg></div>
    <div class="dlg-head"><div><b>Select Destination Location</b><span>Where should Laragon be installed?</span></div><svg fill="url(#g-eleph2)"><use href="#elephant"/></svg></div>
    <div class="dlg-body">
      <div class="row1"><svg viewBox="0 0 20 27"><path fill="#f3cf6a" d="M3 0h13v12l2.500 2.500V23H6z"/><path fill="#fbe19a" d="m0 .5 6 4V26.500L0 24z"/><path fill="#cdb46a" opacity=".5" d="M18 22.500l1.500.5-3 .5z"/></svg><span>Setup will install Laragon into the following folder.</span></div>
      <div class="row2">To continue, click Next. If you would like to select a different folder, click Browse.</div>
      <div class="row3"><div class="input"><span>C:\laragon</span></div><div class="btn">Browse...</div></div>
      <div class="row4">At least 965,9 MB of free disk space is required.</div>
    </div>
    <div class="dlg-foot"><div class="btn primary">Next</div><div class="btn">Cancel</div></div>
  </div>
</div>
</body>
</html>
```
FILE: styles.css
```css
* { box-sizing: border-box; }
html, body { margin: 0; padding: 0; }
body { width: 1920px; height: 1080px; overflow: hidden; background: #fff; font-family: "Open Sans", "Noto Sans", sans-serif; }
i, em { font-style: normal; }
svg { display: block; flex: none; }
.defs { position: absolute; width: 0; height: 0; }
.screen { position: relative; width: 1920px; height: 1080px; display: flex; flex-direction: column; overflow: hidden; }

/* browser chrome */
.tabstrip { height: 40px; background: #2b2b2b; display: flex; align-items: center; font-size: 11.5px; color: #c7c7c7; flex: none; }
.tabstrip svg { width: 16px; height: 16px; }
.tabsearch { width: 28px; height: 28px; margin: 0 3px 0 6px; border-radius: 9px; background: #3c3c3c; }
.tabstrip .tabsearch svg { width: 28px; height: 28px; }
.pin { width: 46px; height: 16px; padding-left: 15px; border-right: 1px solid #484848; }
.pin.dark { fill: #202a33; }
.tab { width: 103px; height: 16px; padding: 0 10px 0 10px; display: flex; align-items: center; border-right: 1px solid #484848; }
.tab span { width: 33px; margin: 0 9px 0 8px; white-space: nowrap; overflow: hidden; line-height: 20px; -webkit-mask-image: linear-gradient(90deg, #000 60%, transparent); mask-image: linear-gradient(90deg, #000 60%, transparent); }
.tab.rec span { width: 14px; margin-right: 4px; }
.tab.rec svg:nth-child(3) { margin-right: 8px; }
.tab.last { border-color: transparent; }
.tab.active { position: relative; width: 97px; height: 34px; margin: 6px 0 0 3px; padding: 0 8px 6px 8px; border: 0; border-radius: 9px 9px 0 0; background: #3c3c3c; color: #e8e8e8; }
.tab.active span { margin-right: 8px; }
.tab.active::before, .tab.active::after { content: ""; position: absolute; bottom: 0; width: 10px; height: 10px; }
.tab.active::before { left: -10px; background: radial-gradient(circle at 0 0, transparent 9.5px, #3c3c3c 10px); }
.tab.active::after { right: -10px; background: radial-gradient(circle at 100% 0, transparent 9.5px, #3c3c3c 10px); }
.tabstrip .newtab { width: 14px; height: 14px; margin-left: 13px; }
.winbtns { margin-left: auto; display: flex; gap: 34px; padding-right: 17px; }
.tabstrip .winbtns svg { width: 12px; height: 12px; }
.toolbar { height: 41px; background: #3c3c3c; display: flex; align-items: center; padding: 5px 14px 0; flex: none; }
.nav { width: 16px; height: 16px; margin-right: 20px; }
.omnibox { width: 1374px; height: 34px; margin-left: -2px; border-radius: 17px; background: #282828; display: flex; align-items: center; padding: 0 16px 0 5px; }
.siteinfo { width: 24px; height: 28px; border-radius: 12px; background: #3c3c3c; display: flex; align-items: center; justify-content: center; margin-right: 8px; }
.siteinfo svg { width: 15px; height: 15px; }
.url { font-size: 13.5px; color: #c7c7c7; }
.url b { font-weight: 400; color: #fff; }
.star { width: 17px; height: 17px; margin-left: auto; }
.ext { display: flex; align-items: center; gap: 20px; margin-left: 18px; }
.ext svg { width: 16px; height: 16px; }
.ext .big { width: 20px; height: 20px; margin: 0 -2px; }
.ext.right { margin-left: 19px; }
.vsep { width: 1px; height: 16px; background: #5c5c5c; margin-left: 18px; flex: none; }
.bookmarks { height: 40px; background: #3c3c3c; border-bottom: 1px solid #4c4c4c; display: flex; align-items: center; gap: 20px; padding: 0 14px 2px 12px; flex: none; font-size: 11.5px; color: #c7c7c7; }
.bookmarks > svg { width: 16px; height: 16px; }
.white { fill: #fff; }
.bm-label { margin-left: -14px; font-size: 11.1px; }
.allbm { margin-left: auto; display: flex; align-items: center; }
.allbm svg { width: 18px; height: 16px; margin: 0 7px 0 15px; }

/* page */
.viewport { height: 919px; display: flex; flex: none; }
.page { width: 1903px; height: 919px; overflow: hidden; }
.site-header { position: relative; height: 70px; background: linear-gradient(90deg, #413d5e 0, #4b4270 28%, #574980 42%, #62508f 66%, #625193); border-bottom: 1px solid #1d1c3a; display: flex; align-items: center; padding-left: 372px; font-family: Lato, sans-serif; }
.net { position: absolute; left: 0; top: 0; width: 1903px; height: 69px; }
.logo { width: 50px; height: 47px; margin-top: 1px; }
nav { display: flex; margin-left: 34px; color: #fff; font-size: 15px; font-weight: 500; line-height: 24px; gap: 33px; margin-top: 1px; -webkit-text-stroke: .2px; }
.tight { margin-left: -1px; }
.lang { display: flex; align-items: center; margin-left: 448px; gap: 7px; color: #c9c2da; font-size: 15px; font-weight: 500; margin-top: 1px; }
.lang svg { width: 14px; height: 14px; }
.content { display: flex; padding-left: 372px; }
.side { width: 220px; padding-top: 40px; font-family: Lato, sans-serif; font-size: 14.9px; color: #6e6e6e; }
.side section { margin-bottom: 40px; }
.side h4 { margin: 0; width: max-content; border-top: 1px solid #e6e6e6; line-height: 35px; font-size: 15px; font-weight: 700; color: #3f9ad8; }
.side a { display: block; line-height: 29px; white-space: nowrap; }
.side b { font-weight: 700; }
.toc { margin-left: 39px; }
.toc section { margin-bottom: 18px; }
.toc .top { font-size: 13.8px; }
main { width: 720px; padding-top: 38px; font-family: "Noto Sans CJK KR", sans-serif; font-size: 13.8px; letter-spacing: -.165px; line-height: 24px; color: #5a5a5a; }
main b { color: #444; }
main a, main a b { color: #1a87d0; }
main p { margin: 0 0 15px; white-space: nowrap; }
.pair { display: flex; justify-content: space-between; }
p.pair { padding-right: 27px; margin: 0; }
.title { display: flex; justify-content: space-between; height: 40px; margin-bottom: 32px; }
.title svg { width: 22px; height: 22px; margin-top: 9px; }
h1 { margin: 0; font: 300 35px/40px Lato, sans-serif; letter-spacing: .2px; color: #555; }
h2 { margin: 31px 0 10px; font-size: 20.2px; letter-spacing: 0; line-height: 30px; color: #454545; }
ul { margin: 0 0 15px; padding-left: 19px; list-style: none; }
li { position: relative; white-space: nowrap; }
li::before { content: ""; position: absolute; left: -17px; top: 10px; width: 5px; height: 5px; border-radius: 50%; background: #444; }
li.pair { padding-right: 52px; }
.short { padding-right: 26px; }
code { font: 12px/18px "DejaVu Sans Mono", monospace; letter-spacing: 0; background: #f2f2f2; margin-top: 4px; align-self: flex-start; color: #555; padding: 0 4px; }
hr { margin: 16px 0 0; border: 0; height: 2px; border-top: 1px solid #9a9a9a; border-bottom: 1px solid #e8e8e8; }
hr + h2 { margin-top: 30px; }
.links { margin: 11px 0 29px; }
.links + h2 { margin-top: 30px; }
.scrollbar { width: 17px; background: #f0f0f0; display: flex; flex-direction: column; }
.scrollbar svg { width: 17px; height: 17px; }
.scrollbar i { height: 676px; margin: 0 2px auto; background: #c1c1c1; }

/* taskbar */
.taskbar { height: 40px; flex: none; display: flex; justify-content: space-between; background: linear-gradient(90deg, #1d1d1d 0, #1d1d1d 555px, #444 640px, #484848 1280px, #3a3a3a 1330px, #1c1c1c 1400px, #1c1c1c 100%); }
.apps { display: flex; gap: 1px; }
.tb { position: relative; width: 48px; height: 40px; display: flex; align-items: center; justify-content: center; }
.tb svg { width: 16px; height: 16px; }
.tb:nth-child(-n+3) { margin-right: -1px; }
.tb.gap { margin-left: 3px; }
.tb.s24 svg { width: 24px; height: 24px; }
.tb.s22 svg { width: 22px; height: 22px; }
.run::after { content: ""; position: absolute; left: 4px; bottom: 0; width: 40px; height: 2px; background: #b5b2b0; }
.run.multi::after { background: linear-gradient(90deg, #b5b2b0 31px, #7c7a79 31px); }
.run.on { background: #6e6e6e; }
.run.on::after { left: 0; width: 48px; }
.badge { position: absolute; right: 1px; bottom: 4px; min-width: 20px; height: 17px; padding: 0 3px; border: 1px solid #8a8a8a; border-radius: 9px; background: #2d2d2d; color: #fff; font-size: 11.5px; font-weight: 600; line-height: 15px; text-align: center; }
.tray { display: flex; align-items: center; color: #fff; }
.tray > svg { width: 16px; height: 16px; margin-right: 8px; }
.tray > .pen { margin-left: 4px; margin-right: 12px; }
.clock { width: 62px; display: flex; flex-direction: column; align-items: center; font-size: 11.2px; line-height: 18px; margin-top: -1px; }
.notif { position: relative; margin-left: 16px; width: 36px; }
.notif svg { width: 16px; height: 16px; }
.notif .badge { right: 9px; bottom: -8px; width: 19px; min-width: 0; padding: 0; background: #3c3c3c; }
.showdesk { width: 5px; height: 40px; border-left: 1px solid #6b6b6b; }

.activate { position: absolute; left: 1599px; top: 944px; color: #bdbdbd; font-size: 19.1px; line-height: 28px; white-space: nowrap; }
.activate span { display: block; font-size: 14.4px; line-height: 18px; }

/* installer window */
.dialog { position: absolute; left: 710px; top: 320px; width: 499px; height: 392px; border: 1px solid #6d6d6d; background: #f0f0f0; box-shadow: 0 3px 16px rgba(0,0,0,.38); font-family: "Noto Sans", sans-serif; font-size: 10.5px; color: #000; display: flex; flex-direction: column; white-space: nowrap; }
.dlg-title { height: 31px; background: #fff; display: flex; align-items: center; padding: 0 18px 2px 8px; font-size: 11.2px; }
.dlg-title svg { width: 11px; height: 11px; margin-left: 34px; }
.dlg-title .ic { width: 16px; height: 16px; margin: 0 5px 0 0; }
.dlg-title .w1 { margin-left: auto; }
.dlg-head { height: 58px; background: #fff; border-bottom: 1px solid #a0a0a0; display: flex; justify-content: space-between; padding: 3px 7px 0 24px; }
.dlg-head div { display: flex; flex-direction: column; line-height: 16px; padding-top: 5px; }
.dlg-head b { letter-spacing: .41px; }
.dlg-head span { padding-left: 16px; letter-spacing: -.18px; }
.dlg-head svg { width: 47px; height: 49px; }
.dlg-body { height: 255px; border-bottom: 1px solid #a0a0a0; padding: 16px 41px 0 40px; display: flex; flex-direction: column; }
.row1 { display: flex; height: 28px; align-items: center; letter-spacing: -.17px; }
.row1 svg { width: 20px; height: 27px; margin: 0 18px 0 5px; }
.row1 span { padding-bottom: 2px; }
.row2 { line-height: 16px; margin-top: 12px; letter-spacing: -.04px; }
.row3 { display: flex; justify-content: space-between; margin-top: 9px; }
.input { width: 332px; height: 21px; border: 1px solid #0078d7; background: #fff; padding: 3px 2px; line-height: 13px; }
.input span { display: inline-block; background: #0078d7; color: #fff; height: 13px; }
.btn { width: 73px; height: 21px; border: 1px solid #adadad; background: #e1e1e1; text-align: center; line-height: 20px; }
.row4 { margin-top: auto; margin-bottom: 10px; line-height: 16px; letter-spacing: -.07px; }
.dlg-foot { display: flex; justify-content: flex-end; gap: 12px; padding: 14px 11px 0 0; }
.primary { border: 2px solid #0078d7; line-height: 18px; }
```
